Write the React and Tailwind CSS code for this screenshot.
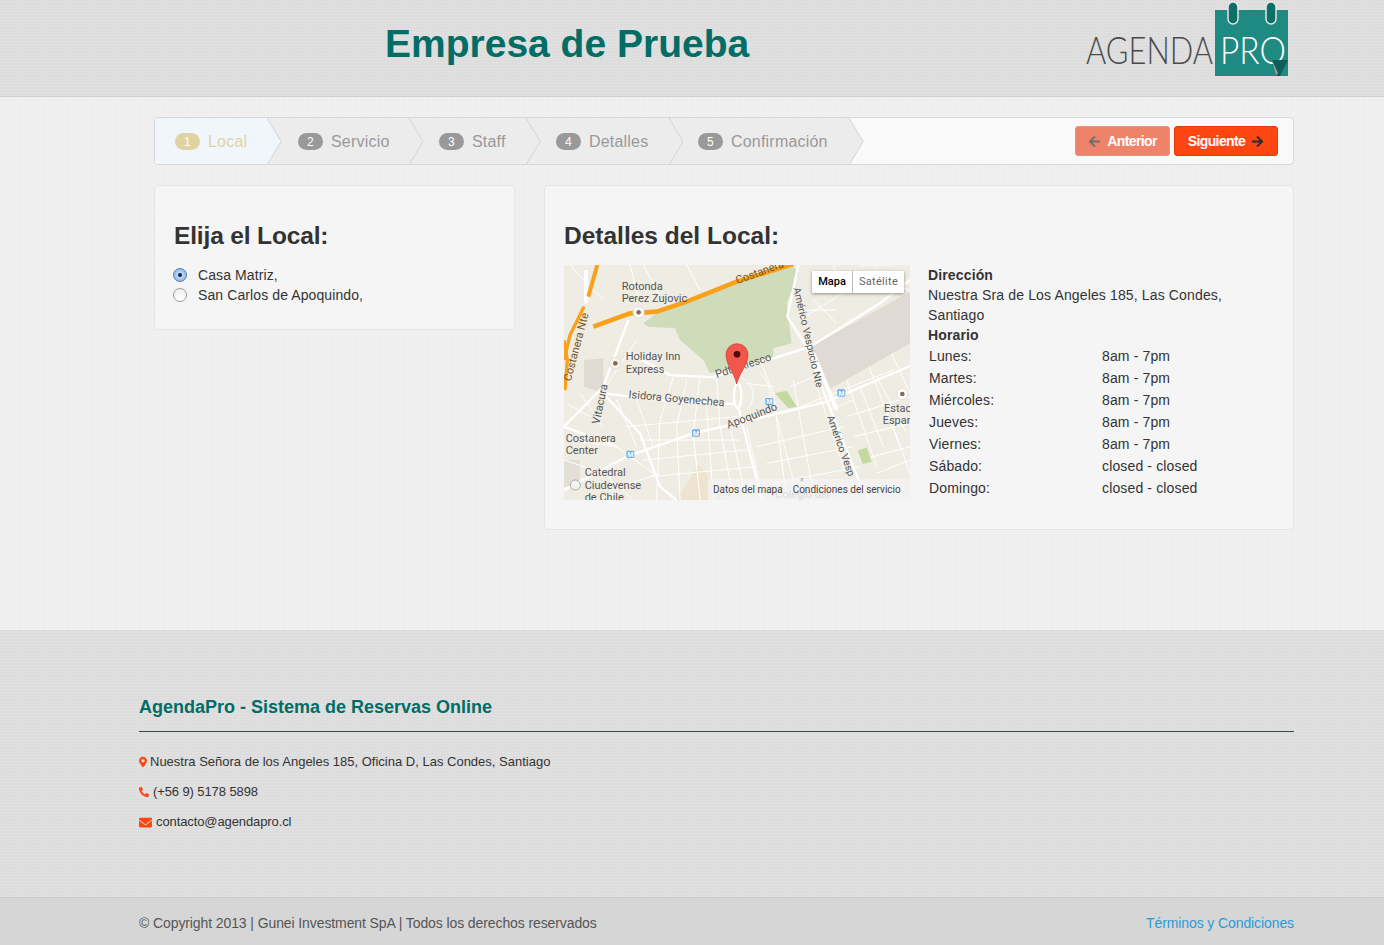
import { FaArrowLeft, FaArrowRight, FaMapMarkerAlt, FaPhoneAlt, FaEnvelope } from 'react-icons/fa'

const steps = [
  { n: 1, label: 'Local', w: 'w-[112px] pl-[20px]', active: true },
  { n: 2, label: 'Servicio', w: 'w-[142px] pl-[31px]' },
  { n: 3, label: 'Staff', w: 'w-[117px] pl-[30px]' },
  { n: 4, label: 'Detalles', w: 'w-[143px] pl-[30px]' },
  { n: 5, label: 'Confirmación', w: 'w-[180px] pl-[29px]' },
]

const hours = [
  ['Lunes:', '8am - 7pm'],
  ['Martes:', '8am - 7pm'],
  ['Miércoles:', '8am - 7pm'],
  ['Jueves:', '8am - 7pm'],
  ['Viernes:', '8am - 7pm'],
  ['Sábado:', 'closed - closed'],
  ['Domingo:', 'closed - closed'],
]

// thin white streets of the map, in 3x coordinates
const streets = [
  'M230,240 L130,390', 'M340,350 L300,480 L290,720', 'M420,350 L400,520 L420,720', 'M470,355 L480,500 L520,720',
  'M600,300 L640,400 L680,720', 'M640,380 L560,370', 'M700,360 L760,700', 'M760,350 L860,650', 'M850,330 L950,620',
  'M920,300 L1020,560', 'M990,270 L1050,400', 'M200,500 L530,470', 'M240,540 L540,540', 'M250,600 L560,570',
  'M270,650 L590,620', 'M590,560 L850,500', 'M620,610 L880,560', 'M640,670 L900,620', 'M860,470 L1050,410',
  'M880,530 L1050,490', 'M900,600 L1050,560', 'M170,420 L230,560', 'M230,420 L280,560', 'M720,180 L830,110 L950,30',
  'M740,150 L830,150', 'M760,120 L830,190', 'M30,540 L170,560 L280,640', 'M12,600 L130,640 L220,720', 'M690,380 L960,270',
  'M720,440 L1000,330', 'M150,640 L160,720', 'M380,360 L350,500 L360,720', 'M440,440 L460,720', 'M510,500 L560,720',
  'M560,500 L610,720', 'M650,470 L710,700', 'M805,450 L880,420', 'M900,380 L970,560', 'M950,350 L1040,520',
  'M30,15 L130,120', 'M210,15 L240,130', 'M250,15 L300,110', 'M380,15 L420,90', 'M820,15 L850,100', 'M900,15 L1000,15',
  'M960,60 L1050,90', 'M1000,500 L1050,640', 'M950,640 L1050,600', 'M20,430 L90,470', 'M60,400 L130,500',
  'M540,350 A60,60 0 0 1 560,450', 'M600,340 A90,90 0 0 1 620,450', 'M180,680 L300,640',
]

function MapPlaceholder() {
  return (
    <div className="relative w-[346px] h-[235px] overflow-hidden shrink-0 bg-[#efece4]">
      <svg viewBox="12 15 1038 705" width="346" height="235" className="block" style={{ fontFamily: 'Roboto, sans-serif' }}>
        <polygon points="72,300 130,295 130,400 72,380" fill="#dfdbd4" />
        <polygon points="350,720 415,615 480,690 490,720" fill="#eee3cf" />
        <polygon points="12,600 60,600 60,680 12,680" fill="#e3dfd7" />
        <g stroke="#ffffff" strokeWidth="3" fill="none">
          {streets.map((d) => (
            <path key={d} d={d} />
          ))}
        </g>
        <polygon points="750,262 1050,95 1050,250 800,392" fill="#dfdbd4" />
        <polygon points="250,190 300,152 390,128 530,68 700,20 716,40 680,130 695,250 640,265 640,290 450,340 430,300 360,240 345,205 265,200" fill="#cfdcba" />
        <polygon points="645,400 680,392 710,440 685,445" fill="#c3d9a0" />
        <polygon points="893,572 920,562 935,605 908,612" fill="#c3d9a0" />
        <g stroke="#ffffff" strokeWidth="7" fill="none">
          <path d="M205,180 L130,380 L12,500" />
          <path d="M120,390 L240,520 L300,680 L350,720" />
          <path d="M220,285 L330,345 L460,352 L640,295 L750,260 L960,130 L1050,60" />
          <path d="M12,690 L200,590 L400,520 L530,490 L800,425 L1050,318" />
          <path d="M130,400 L300,420 L525,432" />
          <path d="M535,442 L605,720" />
          <path d="M12,500 L170,560" />
          <ellipse cx="533" cy="407" rx="11" ry="37" />
          <path d="M715,15 L682,170 L740,260 L800,420 L900,670 L930,720" />
          <path d="M760,280 L830,450" strokeWidth="12" />
        </g>
        <rect x="72" y="30" width="12" height="100" fill="#ffffff" />
        <path d="M100,200 L210,160 L290,155 L380,125 L530,65 L700,12" stroke="#f9a11b" strokeWidth="14" fill="none" />
        <path d="M112,15 L85,110" stroke="#f9a11b" strokeWidth="12" fill="none" />
        <path d="M72,140 L30,225 L12,300" stroke="#f9a11b" strokeWidth="10" fill="none" />
        <path d="M15,390 L22,300 L12,240" stroke="#f9a11b" strokeWidth="10" fill="none" />
        <circle cx="236" cy="157" r="17" fill="#fff" stroke="#d5d2ca" strokeWidth="2" />
        <circle cx="236" cy="157" r="7" fill="#8a6a55" />
        <circle cx="166" cy="310" r="17" fill="#f6f3ee" stroke="#d5d2ca" strokeWidth="2" />
        <circle cx="166" cy="310" r="7" fill="#8a6a55" />
        <circle cx="1027" cy="402" r="17" fill="#fff" stroke="#d5d2ca" strokeWidth="2" />
        <circle cx="1027" cy="402" r="7" fill="#8a6a55" />
        <circle cx="726" cy="660" r="13" fill="#f6f3ee" />
        <circle cx="726" cy="660" r="5" fill="#8a6a55" />
        <circle cx="46" cy="675" r="15" fill="#f6f3ee" stroke="#888" strokeWidth="2" />
        {[[628, 425], [844, 399], [408, 519], [211, 583]].map(([x, y]) => (
          <g key={x}>
            <rect x={x - 12} y={y - 11} width="24" height="22" rx="4" fill="#6fb1ec" />
            <text x={x} y={y + 8} textAnchor="middle" fontSize="20" fontWeight="700" fill="#fff">M</text>
          </g>
        ))}
        <g fontSize="33" fill="#555">
          <text x="185" y="90">Rotonda</text>
          <text x="185" y="127">Perez Zujovic</text>
          <text x="197" y="301">Holiday Inn</text>
          <text x="197" y="338">Express</text>
          <text x="17" y="545">Costanera</text>
          <text x="17" y="582">Center</text>
          <text x="74" y="648">Catedral</text>
          <text x="74" y="688">Ciudevense</text>
          <text x="74" y="722">de Chile</text>
          <text x="972" y="455">Estac</text>
          <text x="968" y="491">Espar</text>
          <text x="645" y="715" fill="#999">Colegio del</text>
          <text transform="translate(205,414) rotate(5)">Isidora Goyenechea</text>
          <text transform="translate(470,354) rotate(-18)">Pdte Riesco</text>
          <text transform="translate(505,506) rotate(-21)">Apoquindo</text>
          <text transform="translate(118,494) rotate(-78)">Vitacura</text>
          <text transform="translate(700,85) rotate(77)" fontSize="31">Américo Vespucio Nte</text>
          <text transform="translate(800,470) rotate(70)" fontSize="31">Américo Vesp</text>
          <text transform="translate(532,72) rotate(-20)" fill="#7a5520">Costanera</text>
          <text transform="translate(32,365) rotate(-75)" fill="#7a5520">Costanera Nte</text>
        </g>
        <path d="M530,372 C524,340 498,315 498,284 A33,33 0 1 1 564,284 C564,315 537,340 530,372 Z" fill="#f2564c" stroke="#c63a32" strokeWidth="2" />
        <circle cx="531" cy="283" r="10" fill="#4d0b08" />
      </svg>
      <div className="absolute top-[6px] left-[248px] flex h-[22px] text-[11px] bg-white shadow-[0_1px_3px_rgba(0,0,0,0.4)] font-['Roboto',sans-serif]">
        <span className="w-[41px] flex items-center justify-center font-medium text-black border-r border-[#bbb]">Mapa</span>
        <span className="w-[51px] flex items-center justify-center text-[#666] tracking-[0.3px]">Satélite</span>
      </div>
      <div className="absolute bottom-0 right-0 w-[202px] h-[21px] pl-[5px] flex items-center gap-[10px] bg-[#f5f5f5]/70 text-[10px] text-[#444] whitespace-nowrap font-['Roboto',sans-serif]">
        <span>Datos del mapa</span>
        <span>Condiciones del servicio</span>
      </div>
    </div>
  )
}

function Logo() {
  return (
    <svg width="210" height="80" viewBox="0 0 210 80" className="block">
      <rect x="129" y="10" width="73" height="66" fill="#1f8a81" />
      <rect x="142" y="2" width="10" height="22" rx="5" fill="#0c6f68" stroke="#e6e6e6" strokeWidth="1.5" />
      <rect x="180" y="2" width="10" height="22" rx="5" fill="#0c6f68" stroke="#e6e6e6" strokeWidth="1.5" />
      <text x="0" y="64" fontSize="38" fontWeight="300" fill="#4a4a4a" textLength="127" lengthAdjust="spacingAndGlyphs" style={{ fontFamily: 'Lato, sans-serif' }}>AGENDA</text>
      <text x="134" y="64" fontSize="38" fontWeight="300" fill="#ffffff" textLength="66" lengthAdjust="spacingAndGlyphs" style={{ fontFamily: 'Lato, sans-serif' }}>PRO</text>
      <polygon points="202,60 186,60 190,76 194,76" fill="#0c5f59" />
      <polygon points="186,60 190,76 192,73" fill="#9a9a9a" />
    </svg>
  )
}

function Chevron() {
  return (
    <svg width="15" height="48" viewBox="0 0 15 48" className="absolute top-0 left-full z-10 block">
      <polygon points="0,0 14,23.5 0,48" fill="inherit" />
      <polyline points="0,0 14,23.5 0,47" fill="none" stroke="#d4d4d4" strokeWidth="1" />
    </svg>
  )
}

export default function App() {
  const texture = "bg-[repeating-linear-gradient(0deg,rgba(255,255,255,0.1)_0,rgba(255,255,255,0.1)_1px,transparent_1px,transparent_3px),repeating-linear-gradient(90deg,rgba(0,0,0,0.016)_0,rgba(0,0,0,0.016)_1px,transparent_1px,transparent_3px)]"
  return (
    <div className="min-h-[945px] flex flex-col bg-[#f0f0f0] text-[#333] font-['Liberation_Sans',Arial,sans-serif]">
      <header className={`h-[97px] shrink-0 bg-[#dedede] border-b border-[#cfcfcf] flex pl-[385px] pr-[88px] justify-between ${texture}`}>
        <h1 className="text-[39px] leading-[87px] font-bold text-[#006d66]">Empresa de Prueba</h1>
        <Logo />
      </header>

      <main className={`h-[533px] shrink-0 pl-[154px] pr-[90px] pt-[20px] ${texture}`}>
        <div className="h-[48px] flex justify-between rounded border border-[#d8d8d8] bg-[#f9f9f9] overflow-hidden">
          <ol className="flex">
            {steps.map((s) => (
              <li
                key={s.n}
                className={`relative h-full flex items-center gap-[8px] pt-[1px] text-[16px] tracking-[0.2px] ${s.w} ${s.active ? 'bg-[#f1f6fd] fill-[#f1f6fd] text-[#e0d3a2]' : 'bg-[#ececec] fill-[#ececec] text-[#999]'}`}
              >
                <span className={`w-[25px] h-[17px] flex items-center justify-center rounded-full text-[12px] text-white ${s.active ? 'bg-[#e0d3a2]' : 'bg-[#999]'}`}>{s.n}</span>
                {s.label}
                <Chevron />
              </li>
            ))}
          </ol>
          <div className="flex items-center gap-[4px] pr-[15px]">
            <button className="w-[95px] h-[30px] flex items-center justify-center gap-[6px] rounded-[3px] bg-[#ef8369] border border-[#e9927d] text-white text-[14px] font-bold tracking-[-0.6px]">
              <FaArrowLeft className="text-[13px] text-[#6e6e6e]" /> Anterior
            </button>
            <button className="w-[104px] h-[30px] flex items-center justify-center gap-[6px] rounded-[3px] bg-[#ff4612] border border-[#e33c0c] text-white text-[14px] font-bold tracking-[-0.6px]">
              Siguiente <FaArrowRight className="text-[13px] text-[#2b2b2b]" />
            </button>
          </div>
        </div>

        <div className="mt-[20px] flex items-start gap-[29px]">
          <section className="w-[361px] h-[145px] shrink-0 rounded bg-[#f5f5f5] border border-[#e5e5e5] px-[19px] pt-[35px]">
            <h2 className="text-[24.5px] leading-[30px] font-bold text-[#333] tracking-[-0.15px]">Elija el Local:</h2>
            <div className="mt-[14px] text-[14px] leading-[20px] tracking-[0.1px] -ml-[1px]">
              {['Casa Matriz,', 'San Carlos de Apoquindo,'].map((name, i) => (
                <label key={name} className="flex items-center gap-[11px]">
                  <span className={`w-[14px] h-[14px] flex items-center justify-center rounded-full border ${i === 0 ? 'border-[#5b7fae] bg-[radial-gradient(circle,#dcecff,#6ea6e6)]' : 'border-[#999] bg-[linear-gradient(#f0f0f0,#ffffff)]'}`}>
                    {i === 0 && <span className="w-[4px] h-[4px] rounded-full bg-[#10243f]" />}
                  </span>
                  {name}
                </label>
              ))}
            </div>
          </section>

          <section className="flex-1 h-[345px] rounded bg-[#f5f5f5] border border-[#e5e5e5] px-[19px] pt-[35px]">
            <h2 className="text-[24.5px] leading-[30px] font-bold text-[#333]">Detalles del Local:</h2>
            <div className="mt-[14px] flex gap-[18px]">
              <MapPlaceholder />
              <div className="w-[346px] text-[14px] leading-[20px] tracking-[0.14px]">
                <div className="font-bold">Dirección</div>
                <div>Nuestra Sra de Los Angeles 185, Las Condes, Santiago</div>
                <div className="font-bold">Horario</div>
                <div className="pl-[1px]">
                  {hours.map(([day, time]) => (
                    <div key={day} className="flex h-[22px] items-center">
                      <span className="w-[173px]">{day}</span>
                      <span>{time}</span>
                    </div>
                  ))}
                </div>
              </div>
            </div>
          </section>
        </div>
      </main>

      <footer className={`flex-1 flex flex-col bg-[#dedede] ${texture}`}>
        <div className="h-[267px] pl-[139px] pr-[90px] pt-[64px]">
          <h4 className="text-[18px] leading-[26px] font-bold text-[#006d66]">AgendaPro - Sistema de Reservas Online</h4>
          <div className="mt-[11px] border-t border-[#2f4f4c]" />
          <ul className="mt-[15px] text-[13px] text-[#333]">
            <li className="h-[30px] flex items-center gap-[3px]">
              <FaMapMarkerAlt className="w-[8px] h-[12px] text-[#ff4612]" /> Nuestra Señora de los Angeles 185, Oficina D, Las Condes, Santiago
            </li>
            <li className="h-[30px] flex items-center gap-[4px] tracking-[-0.1px]">
              <FaPhoneAlt className="text-[10px] text-[#ff4612]" /> (+56 9) 5178 5898
            </li>
            <li className="h-[30px] flex items-center gap-[4px] tracking-[-0.1px]">
              <FaEnvelope className="text-[13px] text-[#ff4612]" /> contacto@agendapro.cl
            </li>
          </ul>
        </div>
        <div className="h-[48px] flex items-center justify-between pt-[4px] pl-[139px] pr-[90px] bg-[#d6d6d6] border-t border-[#cccccc] text-[14px] text-[#555] tracking-[-0.1px]">
          <span>© Copyright 2013 | Gunei Investment SpA | Todos los derechos reservados</span>
          <a href="#" className="text-[#2a9bd6]">Términos y Condiciones</a>
        </div>
      </footer>
    </div>
  )
}
